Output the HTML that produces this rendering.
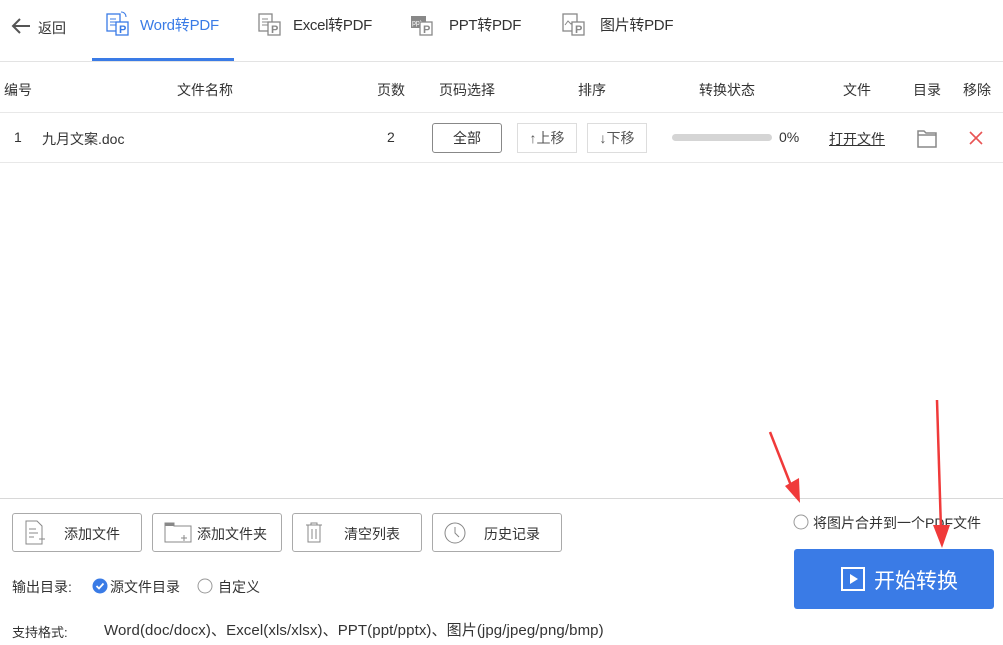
<!DOCTYPE html><html><head><meta charset="utf-8"><style>
*{margin:0;padding:0;box-sizing:border-box}
body{width:1003px;height:645px;background:#fff;font-family:"Liberation Sans","Noto Sans CJK SC",sans-serif;font-size:14px;color:#333;position:relative;overflow:hidden}
.a{position:absolute;white-space:nowrap}
.btn{position:absolute;border:1px solid #aaa;border-radius:3px;background:#fff}
.sb{position:absolute;border:1px solid #ddd;font-size:14px;color:#555;text-align:center;line-height:28px}
</style></head><body>
<svg class="a" style="left:10px;top:16px" width="22" height="20"><path d="M20 10H3M10 3L3 10L10 17" stroke="#555" stroke-width="2" fill="none"/></svg>
<div class="a" style="left:38px;top:18px;font-size:14px">返回</div>
<svg class="a" style="left:106px;top:11px" width="28" height="26"><rect x="1" y="3" width="13" height="17" fill="none" stroke="#3a7be6" stroke-width="1.3"/><path d="M4 8h6M4 11h6M4 14h6" stroke="#3a7be6"/><rect x="10" y="11" width="12" height="13" fill="#fff" stroke="#3a7be6" stroke-width="1.3"/><text x="13" y="22" font-size="11" font-weight="bold" fill="#3a7be6" font-family="Liberation Sans">P</text><path d="M15 1c3 0 5 2 5 5" stroke="#3a7be6" fill="none"/></svg>
<div class="a" style="left:140px;top:14px;font-size:15px;color:#3a7be6;letter-spacing:-0.2px">Word转PDF</div>
<div class="a" style="left:92px;top:58px;width:142px;height:3px;background:#3a7be6"></div>
<svg class="a" style="left:258px;top:11px" width="28" height="26"><rect x="1" y="3" width="13" height="17" fill="none" stroke="#888" stroke-width="1.3"/><path d="M4 8h6M4 11h6M4 14h6" stroke="#888"/><rect x="10" y="11" width="12" height="13" fill="#fff" stroke="#888" stroke-width="1.3"/><text x="13" y="22" font-size="11" font-weight="bold" fill="#888" font-family="Liberation Sans">P</text></svg>
<div class="a" style="left:293px;top:14px;font-size:15px;letter-spacing:-0.3px">Excel转PDF</div>
<svg class="a" style="left:410px;top:11px" width="28" height="26"><rect x="1" y="5" width="15" height="12" fill="#888"/><text x="2" y="14" font-size="7" fill="#fff" font-family="Liberation Sans">ppt</text><rect x="10" y="11" width="12" height="13" fill="#fff" stroke="#888" stroke-width="1.3"/><text x="13" y="22" font-size="11" font-weight="bold" fill="#888" font-family="Liberation Sans">P</text></svg>
<div class="a" style="left:449px;top:14px;font-size:15px;letter-spacing:-0.3px">PPT转PDF</div>
<svg class="a" style="left:562px;top:11px" width="28" height="26"><rect x="1" y="3" width="14" height="17" fill="none" stroke="#888" stroke-width="1.3"/><path d="M3 14l3-4 3 3 2-2" stroke="#888" fill="none"/><rect x="10" y="11" width="12" height="13" fill="#fff" stroke="#888" stroke-width="1.3"/><text x="13" y="22" font-size="11" font-weight="bold" fill="#888" font-family="Liberation Sans">P</text></svg>
<div class="a" style="left:600px;top:14px;font-size:15px;letter-spacing:-0.3px">图片转PDF</div>
<div class="a" style="left:0;top:61px;width:1003px;height:1px;background:#e3e3e3"></div>
<div class="a" style="top:80px;left:4px">编号</div>
<div class="a" style="top:80px;left:177px">文件名称</div>
<div class="a" style="top:80px;left:377px">页数</div>
<div class="a" style="top:80px;left:439px">页码选择</div>
<div class="a" style="top:80px;left:578px">排序</div>
<div class="a" style="top:80px;left:699px">转换状态</div>
<div class="a" style="top:80px;left:843px">文件</div>
<div class="a" style="top:80px;left:913px">目录</div>
<div class="a" style="top:80px;left:963px">移除</div>
<div class="a" style="left:0;top:112px;width:1003px;height:1px;background:#e8e8e8"></div>
<div class="a" style="top:129px;left:14px">1</div>
<div class="a" style="top:129px;left:42px">九月文案.doc</div>
<div class="a" style="top:129px;left:387px">2</div>
<div class="btn" style="left:432px;top:123px;width:70px;height:30px;border-color:#888;text-align:center;line-height:28px">全部</div>
<div class="sb" style="left:517px;top:123px;width:60px;height:30px">↑上移</div>
<div class="sb" style="left:587px;top:123px;width:60px;height:30px">↓下移</div>
<div class="a" style="left:672px;top:134px;width:100px;height:7px;border-radius:4px;background:#d5d5d5"></div>
<div class="a" style="left:779px;top:129px">0%</div>
<div class="a" style="left:829px;top:129px;text-decoration:underline">打开文件</div>
<svg class="a" style="left:916px;top:128px" width="22" height="20"><path d="M2 3h6l2 2h10v14H2z M2 7h18" stroke="#888" stroke-width="1.5" fill="none"/></svg>
<svg class="a" style="left:969px;top:131px" width="14" height="14"><path d="M1 1L13 13M13 1L1 13" stroke="#e85454" stroke-width="1.6"/></svg>
<div class="a" style="left:0;top:162px;width:1003px;height:1px;background:#e8e8e8"></div>
<div class="a" style="left:0;top:498px;width:1003px;height:1px;background:#d8d8d8"></div>
<div class="btn" style="left:12px;top:513px;width:130px;height:39px"><svg class="a" style="left:10px;top:6px" width="24" height="26"><path d="M3 1h11l5 5v18H3z M6 9h7M6 13h9M6 17h5M16 19h6M19 16v6" stroke="#888" fill="none"/></svg><span class="a" style="left:51px;top:10px">添加文件</span></div>
<div class="btn" style="left:152px;top:513px;width:130px;height:39px"><svg class="a" style="left:11px;top:7px" width="28" height="24"><path d="M1 2h9v3h17v16H1z" stroke="#888" fill="none"/><rect x="1" y="2" width="9" height="3" fill="#888"/><path d="M17 17h6M20 14v6" stroke="#888"/></svg><span class="a" style="left:44px;top:10px">添加文件夹</span></div>
<div class="btn" style="left:292px;top:513px;width:130px;height:39px"><svg class="a" style="left:11px;top:7px" width="20" height="24"><path d="M2 4h16M7 4V2h6v2M4 4v17h12V4M8 8v10M12 8v10" stroke="#888" fill="none"/></svg><span class="a" style="left:51px;top:10px">清空列表</span></div>
<div class="btn" style="left:432px;top:513px;width:130px;height:39px"><svg class="a" style="left:10px;top:7px" width="24" height="24"><circle cx="12" cy="12" r="10" stroke="#888" fill="none"/><path d="M12 6v6l4 4" stroke="#888" fill="none"/></svg><span class="a" style="left:51px;top:10px">历史记录</span></div>
<div class="a" style="left:12px;top:577px">输出目录:</div>
<svg class="a" style="left:92px;top:578px" width="16" height="16"><circle cx="8" cy="8" r="7.5" fill="#3a7be6"/><path d="M4.5 8l2.5 2.5 4.5-5" stroke="#fff" stroke-width="1.8" fill="none"/></svg>
<div class="a" style="left:110px;top:577px">源文件目录</div>
<svg class="a" style="left:197px;top:578px" width="16" height="16"><circle cx="8" cy="8" r="7" fill="none" stroke="#999"/></svg>
<div class="a" style="left:218px;top:577px">自定义</div>
<div class="a" style="left:12px;top:622px;font-size:13px">支持格式:</div>
<div class="a" style="left:104px;top:619px;font-size:15px;letter-spacing:0.1px">Word(doc/docx)、Excel(xls/xlsx)、PPT(ppt/pptx)、图片(jpg/jpeg/png/bmp)</div>
<svg class="a" style="left:793px;top:514px" width="16" height="16"><circle cx="8" cy="8" r="7" fill="none" stroke="#999"/></svg>
<div class="a" style="left:813px;top:513px">将图片合并到一个PDF文件</div>
<div class="a" style="left:794px;top:549px;width:200px;height:60px;background:#3a7be6;border-radius:3px"></div>
<svg class="a" style="left:841px;top:567px" width="24" height="24"><rect x="1" y="1" width="22" height="22" fill="none" stroke="#fff" stroke-width="2"/><path d="M9 7v10l8-5z" fill="#fff"/></svg>
<div class="a" style="left:874px;top:565px;font-size:21px;color:#fff">开始转换</div>
<svg class="a" style="left:0;top:0" width="1003" height="645"><path d="M770 432L792 488" stroke="#f03a3a" stroke-width="2.5"/><path d="M785 486L800 503L799 478z" fill="#f03a3a"/><path d="M937 400L941 530" stroke="#f03a3a" stroke-width="2.5"/><path d="M933 525L942 548L950 525z" fill="#f03a3a"/></svg>
</body></html>
